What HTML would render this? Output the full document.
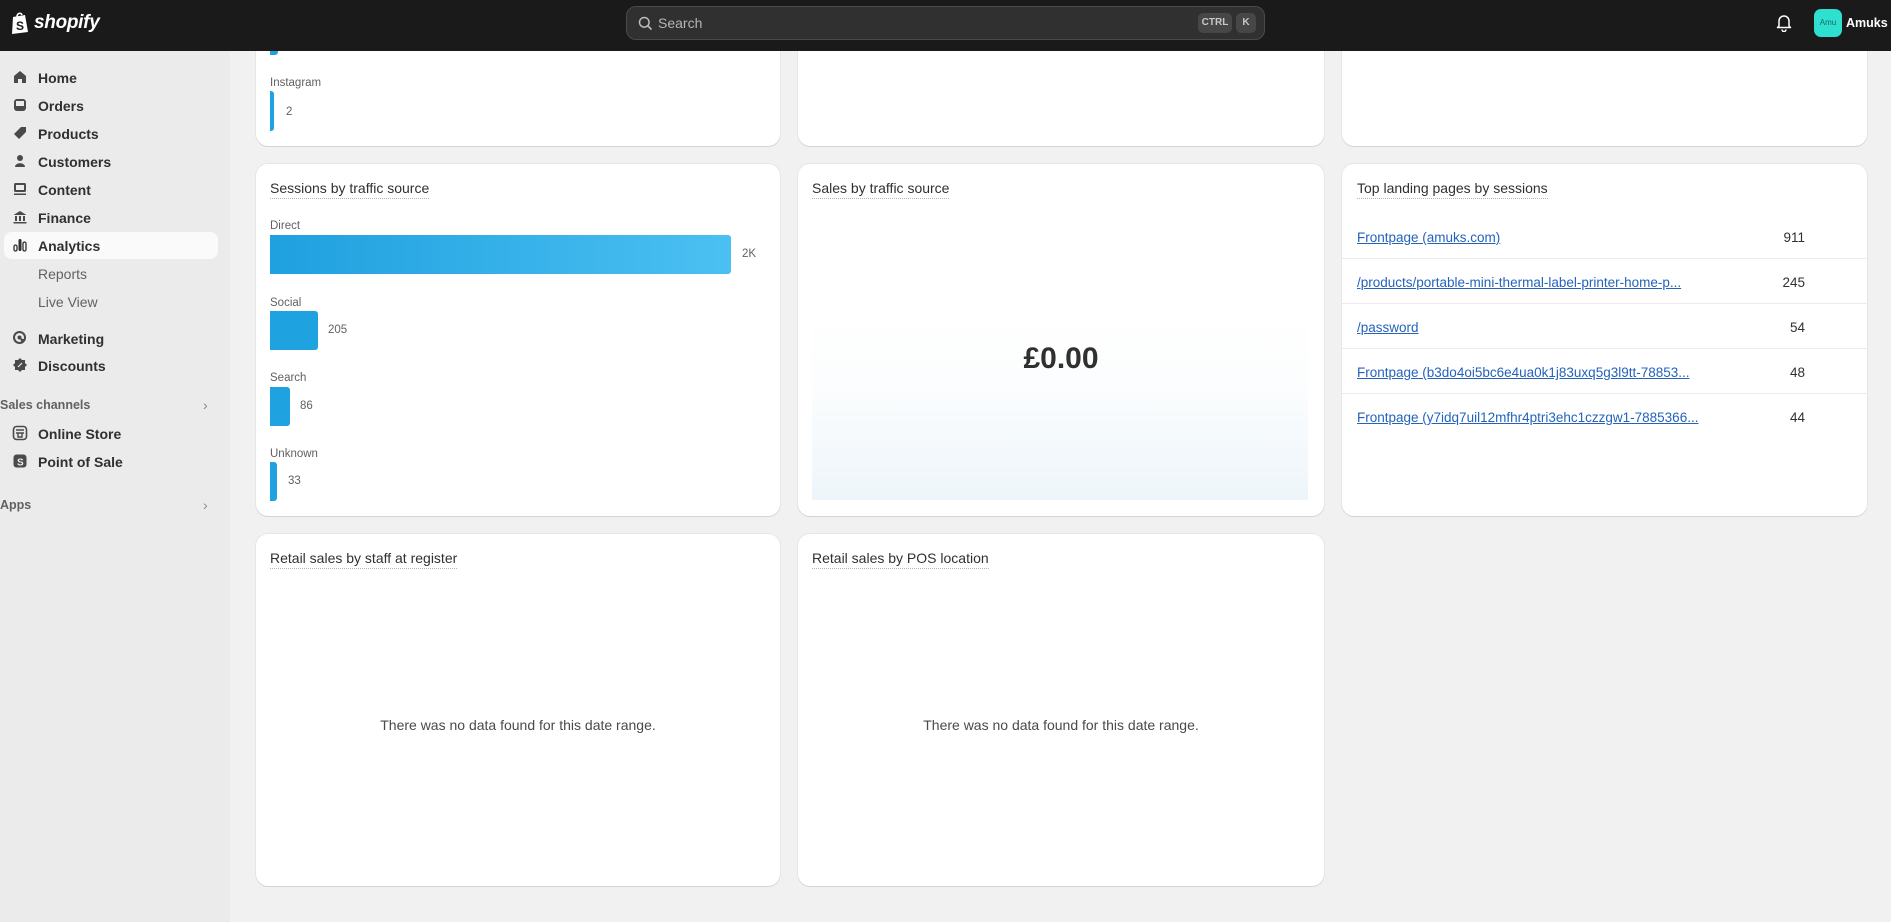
<!DOCTYPE html>
<html><head><meta charset="utf-8"><style>
*{box-sizing:border-box;margin:0;padding:0}
body{width:1891px;height:922px;overflow:hidden;background:#f1f1f1;font-family:"Liberation Sans",Arial,sans-serif;color:#303030;position:relative}
.hdr{position:absolute;left:0;top:0;width:1891px;height:51px;background:#1a1a1a;z-index:10}
.side{position:absolute;left:0;top:51px;width:230px;height:871px;background:#ebebeb}
.nav{position:absolute;left:38px;font-size:14px;font-weight:bold;color:#303030;line-height:18px}
.sub{font-weight:normal;color:#616161}
.ic{position:absolute;left:12px;width:16px;height:16px}
.card{position:absolute;background:#fff;border-radius:12px;box-shadow:0 1px 0 #d4d4d4,0 0 0 1px #e6e6e6;overflow:hidden}
.t{position:absolute;font-size:14px;color:#303030;border-bottom:1.5px dotted #b5b5b5;line-height:17px;padding-bottom:1px}
.lbl{position:absolute;font-size:11.5px;color:#616161}
.bar{position:absolute;background:#1fa3e0;border-radius:0 3px 3px 0}
.val{position:absolute;font-size:11.5px;color:#616161}
.row{position:absolute;left:0;width:100%;height:45px;border-bottom:1px solid #ebebeb}
.row a{position:absolute;left:15px;top:16px;font-size:13.5px;color:#2463bc;text-decoration:underline}
.row span{position:absolute;right:62px;top:16px;font-size:13.5px;color:#303030}
.nd{position:absolute;width:100%;text-align:center;font-size:14px;color:#4a4a4a;top:183px}
</style></head><body>
<div class="hdr">
 <svg style="position:absolute;left:10px;top:11px" width="20" height="24" viewBox="0 0 20 24"><path d="M3 6 L15 4 L18 21 L2 23 Z" fill="#fff"/><path d="M7 6 C7 2 11 1 12 4" stroke="#fff" stroke-width="1.6" fill="none"/><text x="6" y="19" font-size="12" font-weight="bold" fill="#1a1a1a" font-family="Liberation Sans">S</text></svg>
 <div style="position:absolute;left:34px;top:12px;color:#fff;font-size:19px;font-weight:bold;font-style:italic;letter-spacing:-0.3px">shopify</div>
 <div style="position:absolute;left:626px;top:6px;width:639px;height:34px;background:#303030;border:1px solid #4a4a4a;border-radius:10px">
  <svg style="position:absolute;left:11px;top:9px" width="15" height="15" viewBox="0 0 15 15"><circle cx="6.3" cy="6.3" r="4.8" stroke="#bbb" stroke-width="1.5" fill="none"/><path d="M10 10 L13.5 13.5" stroke="#bbb" stroke-width="1.6"/></svg>
  <div style="position:absolute;left:31px;top:8px;font-size:14px;color:#b5b5b5">Search</div>
  <div style="position:absolute;left:571px;top:6px;width:34px;height:20px;background:#474747;border-radius:5px;color:#c8c8c8;font-size:10px;font-weight:bold;text-align:center;line-height:20px">CTRL</div>
  <div style="position:absolute;left:609px;top:6px;width:20px;height:20px;background:#474747;border-radius:5px;color:#c8c8c8;font-size:10px;font-weight:bold;text-align:center;line-height:20px">K</div>
 </div>
 <svg style="position:absolute;left:1776px;top:14px" width="16" height="18" viewBox="0 0 16 18"><path d="M3 12 V7 A5 5 0 0 1 13 7 V12 L14.5 13.5 H1.5 Z" stroke="#fff" stroke-width="1.5" fill="none" stroke-linejoin="round"/><path d="M6 15.5 A2 2 0 0 0 10 15.5" stroke="#fff" stroke-width="1.5" fill="none"/></svg>
 <div style="position:absolute;left:1814px;top:9px;width:28px;height:28px;background:#2ee0d0;border-radius:7px;font-size:8px;color:#1a6a64;text-align:center;line-height:28px">Amu</div>
 <div style="position:absolute;left:1846px;top:16px;color:#fff;font-size:12.5px;font-weight:bold">Amuks</div>
</div>
<div class="side">
 <div style="position:absolute;left:4px;top:181px;width:214px;height:27px;background:#fafafa;border-radius:8px"></div>
 <svg class="ic" style="top:18px" viewBox="0 0 16 16"><path d="M2 7 L8 2 L14 7 V14 H10 V10 H6 V14 H2 Z" fill="#4a4a4a"/></svg><div class="nav" style="top:18px">Home</div>
 <svg class="ic" style="top:46px" viewBox="0 0 16 16"><rect x="2" y="2" width="12" height="12" rx="3" fill="#4a4a4a"/><rect x="4" y="4" width="8" height="5" fill="#ebebeb"/></svg><div class="nav" style="top:46px">Orders</div>
 <svg class="ic" style="top:74px" viewBox="0 0 16 16"><path d="M9 2 H14 V7 L7 14 L2 9 Z" fill="#4a4a4a"/></svg><div class="nav" style="top:74px">Products</div>
 <svg class="ic" style="top:102px" viewBox="0 0 16 16"><circle cx="8" cy="5" r="3" fill="#4a4a4a"/><path d="M3 14 C3 9 13 9 13 14 Z" fill="#4a4a4a"/></svg><div class="nav" style="top:102px">Customers</div>
 <svg class="ic" style="top:130px" viewBox="0 0 16 16"><rect x="2" y="2" width="12" height="9" rx="1.5" fill="#4a4a4a"/><rect x="4" y="4" width="8" height="5" fill="#ebebeb"/><rect x="2" y="12.5" width="12" height="1.5" fill="#4a4a4a"/></svg><div class="nav" style="top:130px">Content</div>
 <svg class="ic" style="top:158px" viewBox="0 0 16 16"><path d="M1.5 6 L8 2 L14.5 6 Z M3 7 H5 V12 H3Z M7 7 H9 V12 H7Z M11 7 H13 V12 H11Z M1.5 13 H14.5 V14.5 H1.5Z" fill="#4a4a4a"/></svg><div class="nav" style="top:158px">Finance</div>
 <svg class="ic" style="top:186px" viewBox="0 0 16 16"><rect x="2" y="8" width="3" height="6" rx="1.5" stroke="#303030" stroke-width="1.3" fill="none"/><rect x="6.5" y="2" width="3" height="12" rx="1.5" fill="#303030"/><rect x="11" y="5" width="3" height="9" rx="1.5" stroke="#303030" stroke-width="1.3" fill="none"/></svg><div class="nav" style="top:186px">Analytics</div>
 <div class="nav sub" style="top:214px">Reports</div>
 <div class="nav sub" style="top:242px">Live View</div>
 <svg class="ic" style="top:279px" viewBox="0 0 16 16"><circle cx="7.5" cy="7.5" r="5.5" stroke="#4a4a4a" stroke-width="2" fill="none"/><circle cx="7.5" cy="7.5" r="2" fill="#4a4a4a"/><path d="M8 8 L14 10 L11 11 L10 14 Z" fill="#4a4a4a"/></svg><div class="nav" style="top:279px">Marketing</div>
 <svg class="ic" style="top:306px" viewBox="0 0 16 16"><path d="M8 1 L10 3 L13 3 L13 6 L15 8 L13 10 L13 13 L10 13 L8 15 L6 13 L3 13 L3 10 L1 8 L3 6 L3 3 L6 3 Z" fill="#4a4a4a"/><path d="M6 10 L10 6" stroke="#ebebeb" stroke-width="1.2"/></svg><div class="nav" style="top:306px">Discounts</div>
 <div style="position:absolute;left:0;top:347px;font-size:12.5px;font-weight:bold;color:#616161">Sales channels</div>
 <div style="position:absolute;left:203px;top:346px;font-size:14px;color:#8a8a8a">›</div>
 <svg class="ic" style="top:374px" viewBox="0 0 16 16"><rect x="1.5" y="1.5" width="13" height="13" rx="3" stroke="#4a4a4a" stroke-width="1.6" fill="none"/><path d="M4 5 H12 M4 8 H12 M6 8 V12 H10 V8" stroke="#4a4a4a" stroke-width="1.4" fill="none"/></svg><div class="nav" style="top:374px">Online Store</div>
 <svg class="ic" style="top:402px" viewBox="0 0 16 16"><rect x="1.5" y="1.5" width="13" height="13" rx="3" fill="#4a4a4a"/><text x="5" y="12.5" font-size="10" font-weight="bold" fill="#ebebeb" font-family="Liberation Sans">S</text></svg><div class="nav" style="top:402px">Point of Sale</div>
 <div style="position:absolute;left:0;top:447px;font-size:12.5px;font-weight:bold;color:#616161">Apps</div>
 <div style="position:absolute;left:203px;top:446px;font-size:14px;color:#8a8a8a">›</div>
</div>

<div class="card" style="left:256px;top:20px;width:524px;height:126px">
 <div class="bar" style="left:14px;top:28px;width:8px;height:7px"></div>
 <div class="lbl" style="left:14px;top:57px">Instagram</div>
 <div class="bar" style="left:14px;top:71px;width:4px;height:40px"></div>
 <div class="val" style="left:30px;top:86px">2</div>
</div>
<div class="card" style="left:798px;top:20px;width:526px;height:126px"></div>
<div class="card" style="left:1342px;top:20px;width:525px;height:126px">
 <div style="position:absolute;left:15px;top:14px;font-size:13.5px;color:#303030">amazon.co.uk/shopping.com</div>
</div>

<div class="card" style="left:256px;top:164px;width:524px;height:352px">
 <div class="t" style="left:14px;top:16px">Sessions by traffic source</div>
 <div class="lbl" style="left:14px;top:56px">Direct</div>
 <div class="bar" style="left:14px;top:71px;width:461px;height:39px;background:linear-gradient(90deg,#1fa0df,#4bc0f2)"></div>
 <div class="val" style="left:486px;top:84px">2K</div>
 <div class="lbl" style="left:14px;top:133px">Social</div>
 <div class="bar" style="left:14px;top:147px;width:48px;height:39px"></div>
 <div class="val" style="left:72px;top:160px">205</div>
 <div class="lbl" style="left:14px;top:208px">Search</div>
 <div class="bar" style="left:14px;top:223px;width:20px;height:39px"></div>
 <div class="val" style="left:44px;top:236px">86</div>
 <div class="lbl" style="left:14px;top:284px">Unknown</div>
 <div class="bar" style="left:14px;top:298px;width:7px;height:39px"></div>
 <div class="val" style="left:32px;top:311px">33</div>
</div>

<div class="card" style="left:798px;top:164px;width:526px;height:352px">
 <div class="t" style="left:14px;top:16px">Sales by traffic source</div>
 <div style="position:absolute;left:14px;top:150px;width:496px;height:186px;background:linear-gradient(180deg,#fff 0%,#fbfdfe 40%,#eef5fa 100%)"></div>
 <div style="position:absolute;left:0;width:100%;text-align:center;top:178px;font-size:30px;font-weight:bold;color:#303030">£0.00</div>
</div>

<div class="card" style="left:1342px;top:164px;width:525px;height:352px">
 <div class="t" style="left:15px;top:16px">Top landing pages by sessions</div>
 <div class="row" style="top:50px"><a>Frontpage (amuks.com)</a><span>911</span></div>
 <div class="row" style="top:95px"><a>/products/portable-mini-thermal-label-printer-home-p...</a><span>245</span></div>
 <div class="row" style="top:140px"><a>/password</a><span>54</span></div>
 <div class="row" style="top:185px"><a>Frontpage (b3do4oi5bc6e4ua0k1j83uxq5g3l9tt-78853...</a><span>48</span></div>
 <div class="row" style="top:230px;border-bottom:none"><a>Frontpage (y7idq7uil12mfhr4ptri3ehc1czzgw1-7885366...</a><span>44</span></div>
</div>

<div class="card" style="left:256px;top:534px;width:524px;height:352px">
 <div class="t" style="left:14px;top:16px">Retail sales by staff at register</div>
 <div class="nd">There was no data found for this date range.</div>
</div>
<div class="card" style="left:798px;top:534px;width:526px;height:352px">
 <div class="t" style="left:14px;top:16px">Retail sales by POS location</div>
 <div class="nd">There was no data found for this date range.</div>
</div>
</body></html>
